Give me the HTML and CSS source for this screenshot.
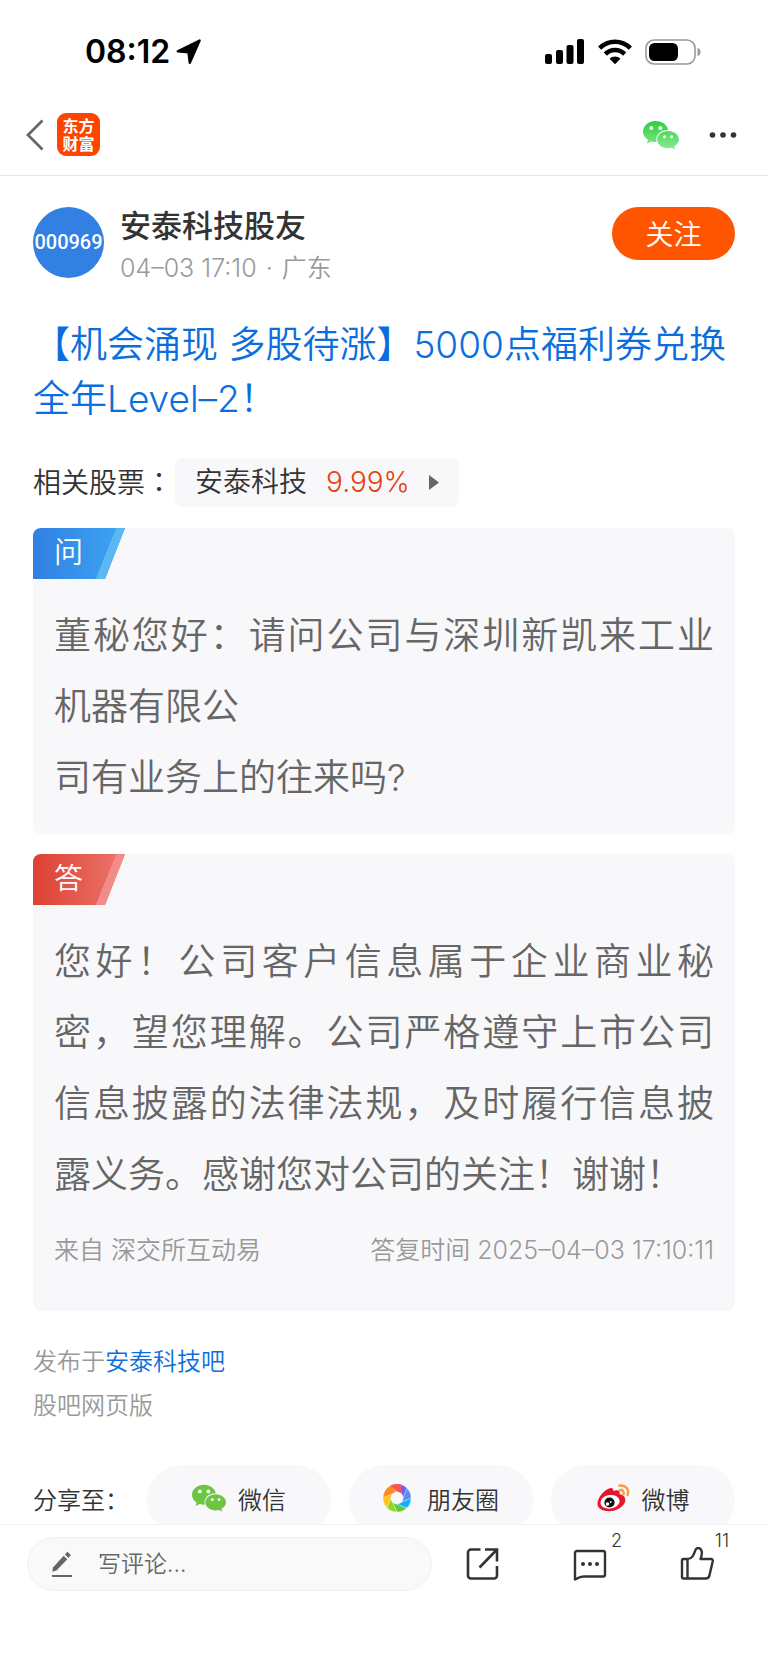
FILE: index.html
```html
<!DOCTYPE html>
<html lang="zh-CN">
<head>
<meta charset="utf-8">
<meta name="viewport" content="width=device-width, initial-scale=1">
<title>安泰科技股友</title>
<link rel="stylesheet" href="styles.css">
</head>
<body>
<svg class="defs" width="0" height="0" aria-hidden="true">
  <defs>
    <linearGradient id="wx" x1="0" y1="0" x2="0" y2="28" gradientUnits="userSpaceOnUse">
      <stop offset="0" stop-color="#28d03a"/><stop offset="1" stop-color="#8ee896"/>
    </linearGradient>
    <symbol id="wechat" viewBox="0 0 36 28">
      <path d="M12.8 0C5.700 0 0 4.700 0 10.600c0 3.400 1.900 6.300 4.900 8.200L3.900 22.600l4.300-2.200c1.800.5 3.700.7 5.400.6A9.500 9.500 0 0 1 13.300 18.500c0-5.300 5-9.500 11.200-9.500h.8C24.200 3.900 19 0 12.800 0Z"/>
      <path d="M25 9.900c-6.100 0-10.900 3.900-10.900 8.700s4.800 8.700 10.900 8.700c1.300 0 2.500-.2 3.600-.5l3.400 1.700-.9-3.100c3-1.600 4.900-4 4.900-6.800 0-4.800-4.900-8.700-11-8.700Z"/>
      <g fill="#fff"><circle cx="8.300" cy="7" r="2"/><circle cx="17.300" cy="7" r="2"/><circle cx="21.500" cy="15.800" r="1.500"/><circle cx="28.600" cy="15.800" r="1.500"/></g>
    </symbol>
  </defs>
</svg>

<div class="status">
  <div class="status-left">
    <span class="time">08:12</span>
    <svg width="26" height="26" viewBox="0 0 26 26" aria-hidden="true"><path d="M23.600 1.600 13.800 23.800 12.500 13.400 1.800 12.300Z" fill="#000" stroke="#000" stroke-width="2.400" stroke-linejoin="round"/></svg>
  </div>
  <div class="status-right">
    <svg width="40" height="26" viewBox="0 0 40 26" aria-hidden="true"><rect x="0" y="15" width="7" height="10" rx="2"/><rect x="11" y="11" width="7" height="14" rx="2"/><rect x="21.500" y="6" width="7" height="19" rx="2"/><rect x="32" y="0" width="7" height="25" rx="2"/></svg>
    <svg width="34" height="26" viewBox="0 0 34 26" aria-hidden="true"><g fill="none" stroke="#000" stroke-width="4.600"><path d="M1.600 9.200C10.200.5 23.800.5 32.400 9.200"/><path d="M7.300 15C12.700 9.600 21.300 9.600 26.700 15"/></g><path d="M17 25.300 11.600 19.700c3-3 7.800-3 10.800 0Z"/></svg>
    <svg width="56" height="26" viewBox="0 0 56 26" aria-hidden="true"><rect x="1" y="1" width="49" height="24" rx="8" fill="none" stroke="#999" stroke-width="1.600"/><rect x="4" y="4" width="29" height="18" rx="5.500"/><path d="M52.500 9c4 1 4 7 0 8Z" fill="#999"/></svg>
  </div>
</div>

<header class="nav">
  <button class="icon-btn back" aria-label="返回"><svg width="18" height="32" viewBox="0 0 18 32"><path d="M16.500 1.500 2 16l14.500 14.500" fill="none" stroke="#666" stroke-width="2.800"/></svg></button>
  <a class="logo" href="#">东方财富</a>
  <button class="icon-btn push" aria-label="微信"><svg width="36" height="28" fill="url(#wx)"><use href="#wechat"/></svg></button>
  <button class="icon-btn" aria-label="更多"><svg width="28" height="8" viewBox="0 0 28 8" fill="#333"><circle cx="3.500" cy="4" r="2.800"/><circle cx="14" cy="4" r="2.800"/><circle cx="24.500" cy="4" r="2.800"/></svg></button>
</header>

<main class="content">
  <section class="author">
    <div class="avatar">000969</div>
    <div class="who">
      <div class="name">安泰科技股友</div>
      <div class="meta">04–03 17:10 <span class="dot">·</span> 广东</div>
    </div>
    <button class="follow">关注</button>
  </section>

  <h1 class="title">【机会涌现 多股待涨】5000点福利券兑换全年Level–2！</h1>

  <div class="stocks">
    <span>相关股票<span class="colon" lang="zh-TW">：</span></span>
    <a class="chip" href="#"><span>安泰科技</span><span class="rise">9.99%</span><svg width="10" height="15" viewBox="0 0 10 15"><path d="M0 0 10 7.500 0 15Z" fill="#666"/></svg></a>
  </div>

  <section class="card">
    <div class="tag ask">问</div>
    <p class="text">董秘您好：请问公司与深圳新凯来工业机器有限公<br>司有业务上的往来吗?</p>
  </section>

  <section class="card">
    <div class="tag answer">答</div>
    <p class="text">您好！公司客户信息属于企业商业秘密，望您理解。公司严格遵守上市公司信息披露的法律法规，及时履行信息披露义务。感谢您对公司的关注！谢谢！</p>
    <div class="source"><span>来自 深交所互动易</span><span>答复时间 2025–04–03 17:10:11</span></div>
  </section>

  <div class="origin">
    <div>发布于<a href="#">安泰科技吧</a></div>
    <div>股吧网页版</div>
  </div>

  <div class="share">
    <span class="share-label">分享至：</span>
    <button class="pill"><svg width="34" height="28" fill="#6cc644"><use href="#wechat"/></svg>微信</button>
    <button class="pill moments">
      <svg width="28" height="28" viewBox="-14 -14 28 28">
        <g stroke="#fff" stroke-width=".5">
          <path d="M-9.900-9.900A14 14 0 0 1 4.500-13.300V-4.500Z" fill="#fa5452"/>
          <path d="M-9.900-9.900A14 14 0 0 1 4.500-13.300V-4.500Z" transform="rotate(45)" fill="#6467f0"/>
          <path d="M-9.900-9.900A14 14 0 0 1 4.500-13.300V-4.500Z" transform="rotate(90)" fill="#5a8af5"/>
          <path d="M-9.900-9.900A14 14 0 0 1 4.500-13.300V-4.500Z" transform="rotate(135)" fill="#10aeff"/>
          <path d="M-9.900-9.900A14 14 0 0 1 4.500-13.300V-4.500Z" transform="rotate(180)" fill="#62cc35"/>
          <path d="M-9.900-9.900A14 14 0 0 1 4.500-13.300V-4.500Z" transform="rotate(225)" fill="#95d52b"/>
          <path d="M-9.900-9.900A14 14 0 0 1 4.500-13.300V-4.500Z" transform="rotate(270)" fill="#ffc61a"/>
          <path d="M-9.900-9.900A14 14 0 0 1 4.500-13.300V-4.500Z" transform="rotate(315)" fill="#ff8a1f"/>
          <path d="M-7-12.100A14 14 0 0 1 4.500-13.300V-4.500Z" fill="#fa5452" stroke="none"/>
        </g>
        <path d="M-2.300-5.500 2.300-5.500 5.500-2.300 5.500 2.300 2.300 5.500-2.300 5.500-5.500 2.300-5.500-2.300Z" fill="#f8f8fb"/>
      </svg>朋友圈</button>
    <button class="pill">
      <svg width="33" height="28" viewBox="0 0 33 28">
        <path d="M12 4.500c2.700-1.200 4.700-.6 4.200 2.600 3.700-1.500 7.300-1.100 6.300 2.900 7.300 1.500 7.200 8.300 2.300 12.500-5.500 5.600-17.600 6.500-22.600 1.500C-3 18.500 4.700 7.500 12 4.500Z" fill="#e6162d"/>
        <ellipse cx="13" cy="17.800" rx="9.700" ry="6.800" transform="rotate(-8 13 17.800)" fill="#fff"/>
        <circle cx="12.500" cy="18.500" r="5.100" fill="#111"/><circle cx="10.500" cy="20" r="1.800" fill="#fff"/><circle cx="13.800" cy="18" r=".9" fill="#fff"/>
        <g fill="none" stroke="#ff9933" stroke-width="2.400" stroke-linecap="round"><path d="M22.300 1.600C28.500.5 32.500 5.500 30.600 10.800"/><path d="M23 6c2.700-.3 4.300 1.500 3.600 4.100"/></g>
      </svg>微博</button>
  </div>
</main>

<footer class="bar">
  <label class="comment">
    <svg width="20" height="27" viewBox="0 0 20 27" aria-hidden="true" fill="#666"><path d="M.8 16.800 11.600 4.800 15.300 8.200 4.500 19.400 .5 20.800Z"/><path d="M12.900 3.400 15.400 .7 18.800 4 16.500 6.900Z"/><rect x="0" y="24" width="20" height="2"/></svg>
    <input type="text" placeholder="写评论..." aria-label="写评论">
  </label>
  <div class="actions">
    <button class="icon-btn" aria-label="分享"><svg width="34" height="34" viewBox="0 0 34 34"><path d="M14.500 2.500H5a3 3 0 0 0-3 3v23a3 3 0 0 0 3 3h23a3 3 0 0 0 3-3v-9.500M19 2.500h12v12M31 2.500 13.500 20.500" fill="none" stroke="#333" stroke-width="2.600"/></svg></button>
    <button class="icon-btn" aria-label="评论"><svg width="34" height="34" viewBox="0 0 34 34"><path d="M4 4h26a2 2 0 0 1 2 2V27.500a2 2 0 0 1-2 2H10.500C7 29.500 4 31.500 2 32.500V6a2 2 0 0 1 2-2Z" fill="none" stroke="#333" stroke-width="2.400" stroke-linejoin="round"/><g fill="#333"><circle cx="10" cy="17" r="2"/><circle cx="17" cy="17" r="2"/><circle cx="24" cy="17" r="2"/></g></svg><span class="count">2</span></button>
    <button class="icon-btn" aria-label="点赞"><svg width="34" height="34" viewBox="0 0 34 34"><path d="M7.500 12H3.500A1.500 1.500 0 0 0 2 13.500v16.500A1.500 1.500 0 0 0 3.500 31.500H26a3.500 3.500 0 0 0 3.300-2.600L32.800 14A1.700 1.700 0 0 0 31.200 12H20.500C21.500 9.500 22.300 6 21.500 3.700 20.600.4 16.500.1 15.400 3.200 13.700 7.700 12.500 12 7.500 12V31.500" fill="none" stroke="#333" stroke-width="2.400" stroke-linejoin="round"/></svg><span class="count">11</span></button>
  </div>
</footer>
</body>
</html>
```

FILE: styles.css
```css
* { box-sizing: border-box; }

body {
  margin: 0;
  height: 100vh;
  display: flex;
  flex-direction: column;
  background: #fff;
  color: #333;
  font-family: Inter, "Noto Sans CJK SC", sans-serif;
  font-size: 24px;
  font-weight: 350;
}

a { color: #0b6edf; text-decoration: none; }
svg { display: block; flex: none; }
button { margin: 0; padding: 0; border: 0; background: none; color: inherit; font: inherit; }
.defs { position: absolute; }
.icon-btn { position: relative; }

.status {
  flex: none;
  display: flex;
  justify-content: space-between;
  align-items: center;
  height: 104px;
  padding: 0 67px 0 85px;
}
.status-left { display: flex; align-items: center; gap: 6px; }
.status-right { display: flex; align-items: center; gap: 13px; }
.time { color: #000; font-size: 32px; font-weight: 600; line-height: 40px; }

.nav {
  flex: none;
  display: flex;
  align-items: center;
  height: 72px;
  padding: 0 31px 10px 26px;
  border-bottom: 1px solid #e6e6e6;
}
.logo {
  width: 43px;
  height: 43px;
  margin-left: 13px;
  padding: 3px 5px;
  border-radius: 9px;
  background: #ff4400;
  color: #fff;
  font-family: "Noto Sans CJK SC", sans-serif;
  font-size: 16px;
  font-weight: 700;
  line-height: 18px;
  text-align: center;
}
.push { margin-left: auto; margin-right: 30px; }

.content {
  flex: 1;
  min-height: 0;
  overflow-y: auto;
  scrollbar-width: none;
  padding: 31px 33px 0;
}

.author { display: flex; align-items: flex-start; }
.avatar {
  width: 71px;
  height: 71px;
  border-radius: 50%;
  background: #3180e2;
  color: #fff;
  font-family: Roboto, sans-serif;
  font-size: 20px;
  font-weight: 500;
  line-height: 71px;
  text-align: center;
}
.who { margin-left: 16px; }
.name { font-size: 31px; font-weight: 500; line-height: 37px; }
.meta { margin-top: 5px; color: #999; font-size: 25px; line-height: 38px; }
.dot { margin: 0 2px; }
.follow {
  width: 123px;
  height: 53px;
  margin-left: auto;
  border-radius: 27px;
  background: #ff5500;
  color: #fff;
  font-size: 28px;
  line-height: 56px;
}

.title {
  margin: 31px 0 0;
  color: #0b6edf;
  font-size: 37px;
  font-weight: 350;
  line-height: 54px;
}

.stocks {
  display: flex;
  align-items: center;
  gap: 2px;
  margin-top: 31px;
  font-size: 28px;
  line-height: 49px;
}
.colon { font-family: "Noto Sans CJK TC", sans-serif; }
.chip {
  display: flex;
  align-items: center;
  padding: 0 20px;
  border-radius: 8px;
  background: #f8f8fb;
  color: #333;
}
.rise { margin: 0 19px; color: #e8400f; }

.card {
  margin-top: 20px;
  padding: 0 21px 21px;
  border-radius: 8px;
  background: #f8f8fb;
  overflow: hidden;
}
.tag {
  width: 92px;
  height: 51px;
  margin-left: -21px;
  padding-left: 21px;
  clip-path: polygon(0 0, 100% 0, 72px 100%, 0 100%);
  color: #fff;
  font-size: 29px;
  line-height: 49px;
}
.ask { background: linear-gradient(112deg, transparent 74%, #5cb8f0 74%), linear-gradient(90deg, #3180e2, #3ca6f2); }
.answer { background: linear-gradient(112deg, transparent 74%, #f58a8a 74%), linear-gradient(90deg, #dd4032, #ec766c); }
.text {
  margin: 21px 0 0;
  color: #666;
  font-size: 37px;
  line-height: 71px;
  text-align: justify;
}
.source {
  display: flex;
  justify-content: space-between;
  padding: 21px 0;
  color: #999;
  font-size: 25px;
  line-height: 38px;
}

.origin { margin-top: 29px; color: #999; line-height: 44px; }

.share { display: flex; align-items: center; gap: 18px; margin-top: 37px; }
.share-label { padding-bottom: 4px; }
.pill {
  flex: 1;
  display: flex;
  align-items: center;
  justify-content: center;
  gap: 12px;
  height: 70px;
  padding-bottom: 4px;
  border-radius: 35px;
  background: #f8f8fb;
}
.moments { gap: 16px; }

.bar {
  flex: none;
  display: flex;
  align-items: flex-start;
  height: 141px;
  padding: 12px 54px 0 27px;
  border-top: 1px solid #f2f2f2;
  background: #fff;
}
.comment {
  flex: none;
  display: flex;
  align-items: center;
  gap: 26px;
  width: 59%;
  height: 54px;
  padding: 0 24px;
  border: 1px solid #f2f2f2;
  border-radius: 27px;
  background: #f9f9f9;
}
.comment input {
  flex: 1;
  min-width: 0;
  padding: 0;
  border: 0;
  outline: 0;
  background: none;
  color: #333;
  font: inherit;
  font-size: 23px;
}
.comment input::placeholder { color: #666; opacity: 1; }
.actions { flex: 1; display: flex; justify-content: space-between; padding: 10px 0 0 34px; }
.count {
  position: absolute;
  right: -15px;
  top: -18px;
  font-size: 18px;
  line-height: 24px;
}
```
